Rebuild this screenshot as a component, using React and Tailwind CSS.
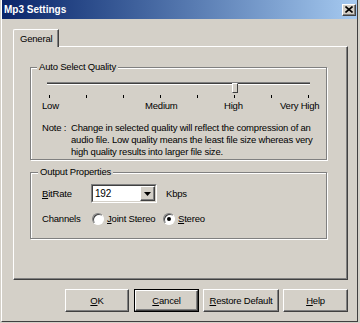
const raised =
  'bg-[#d4d0c8] border border-t-white border-l-white border-r-[#404040] border-b-[#404040] shadow-[inset_-1px_-1px_0_#808080]';
const etched = 'border border-[#808080] shadow-[inset_1px_1px_0_#fff,1px_1px_0_#fff]';

const Radio = ({ checked }) => (
  <div className="w-[12px] h-[12px] rounded-full border border-t-[#808080] border-l-[#808080] border-r-white border-b-white bg-white shadow-[inset_1px_1px_0_#404040] flex items-center justify-center">
    {checked && <div className="w-[4px] h-[4px] rounded-full bg-black" />}
  </div>
);

const Button = ({ width, children, isDefault }) => (
  <div className={`${width} h-[23px] ${isDefault ? 'border border-black' : ''}`}>
    <div className={`${raised} w-full h-full flex items-center justify-center`}>{children}</div>
  </div>
);

const App = () => {
  return (
    <div className="w-[360px] h-[323px] bg-[#d4d0c8] font-['Liberation_Sans',Arial,sans-serif] text-[9.5px] leading-[12px] tracking-[-0.2px] text-black overflow-hidden">
      <div className="ml-[1px] w-[357px] h-[322px] border-l border-l-white border-r border-r-[#404040] border-b border-b-[#404040]">
        {/* title bar */}
        <div className="h-[19px] bg-gradient-to-r from-[#0a246a] to-[#a6caf0] flex items-center justify-between pl-[2px] pr-[1px]">
          <span className="text-white font-bold text-[10px] tracking-normal">Mp3 Settings</span>
          <div className={`${raised} w-[14px] h-[12px] flex items-center justify-center`}>
            <svg width="8" height="7" viewBox="0 0 8 7">
              <path d="M0.5 0.5 L7.5 6.5 M7.5 0.5 L0.5 6.5" stroke="#000" strokeWidth="1.6" />
            </svg>
          </div>
        </div>

        <div className="pl-[11px] pt-[10px]">
          {/* tab */}
          <div className="relative z-10 -mb-[1px] w-[46px] h-[18px] bg-[#d4d0c8] border-t border-l border-t-white border-l-white border-r border-r-[#404040] shadow-[inset_-1px_0_0_#808080] rounded-tl-[2px] flex items-center pl-[6px] pt-[1px]">
            General
          </div>

          {/* tab page */}
          <div className="w-[335px] h-[234px] border border-t-white border-l-white border-r-[#404040] border-b-[#404040] shadow-[inset_-1px_-1px_0_#808080] pl-[16px] pt-[20px]">
            {/* Auto Select Quality */}
            <div className={`relative w-[297px] h-[93px] ${etched}`}>
              <span className="absolute -top-[7px] left-[6px] px-[2px] bg-[#d4d0c8]">Auto Select Quality</span>

              <div className="relative ml-[16px] mt-[14px] w-[263px] h-[12px]">
                <div className="mt-[4px] h-[3px] border-t border-t-[#808080] border-b border-b-white bg-[#404040]" />
                <div className="absolute left-[185px] top-[1px] w-[6px] h-[10px] bg-[#d4d0c8] border border-t-white border-l-white border-r-[#404040] border-b-[#404040]" />
              </div>

              <div className="ml-[18px] mt-[1px] w-[260px] h-[3px] flex justify-between">
                {[0, 1, 2, 3, 4, 5, 6, 7].map((i) => (
                  <div key={i} className="w-[1px] h-[3px] bg-black" />
                ))}
              </div>

              <div className="ml-[11px] mt-[2px] flex h-[12px]">
                <span className="w-[103px]">Low</span>
                <span className="w-[79px]">Medium</span>
                <span className="w-[56px]">High</span>
                <span>Very High</span>
              </div>

              <div className="ml-[11px] mt-[10px] flex">
                <span className="w-[29px] shrink-0">Note :</span>
                <p className="whitespace-nowrap">
                  Change in selected quality will reflect the compression of an
                  <br />
                  audio file. Low quality means the least file size whereas very
                  <br />
                  high quality results into larger file size.
                </p>
              </div>
            </div>

            {/* Output Properties */}
            <div className={`relative mt-[12px] w-[297px] h-[67px] ${etched}`}>
              <span className="absolute -top-[7px] left-[7px] px-[2px] bg-[#d4d0c8]">Output Properties</span>

              <div className="ml-[11px] mt-[11px] h-[19px] flex items-center">
                <span className="w-[49px]">
                  <u className="underline-offset-1">B</u>itRate
                </span>
                <div className="w-[66px] h-[19px] border border-t-[#808080] border-l-[#808080] border-r-white border-b-white">
                  <div className="w-full h-full border border-t-[#404040] border-l-[#404040] border-r-[#d4d0c8] border-b-[#d4d0c8] bg-white flex items-center justify-between">
                    <span className="pl-[2px] text-[10px]">192</span>
                    <div className={`${raised} w-[15px] h-full flex items-center justify-center`}>
                      <svg width="7" height="4" viewBox="0 0 7 4">
                        <path d="M0 0 H7 L3.5 4 Z" fill="#000" />
                      </svg>
                    </div>
                  </div>
                </div>
                <span className="ml-[9px]">Kbps</span>
              </div>

              <div className="ml-[11px] mt-[10px] h-[12px] flex items-center">
                <span className="w-[50px]">Channels</span>
                <Radio />
                <span className="ml-[3px] w-[56px]">
                  <u className="underline-offset-1">J</u>oint Stereo
                </span>
                <Radio checked />
                <span className="ml-[3px]">
                  <u className="underline-offset-1">S</u>tereo
                </span>
              </div>
            </div>
          </div>

          {/* buttons */}
          <div className="ml-[52px] mt-[9px] flex">
            <Button width="w-[64px]">
              <span><u className="underline-offset-1">O</u>K</span>
            </Button>
            <div className="ml-[5px]">
              <Button width="w-[65px]" isDefault>
                <span><u className="underline-offset-1">C</u>ancel</span>
              </Button>
            </div>
            <div className="ml-[4px]">
              <Button width="w-[76px]">
                <span><u className="underline-offset-1">R</u>estore Default</span>
              </Button>
            </div>
            <div className="ml-[4px]">
              <Button width="w-[65px]">
                <span><u className="underline-offset-1">H</u>elp</span>
              </Button>
            </div>
          </div>
        </div>
      </div>
    </div>
  );
};

export default App;
